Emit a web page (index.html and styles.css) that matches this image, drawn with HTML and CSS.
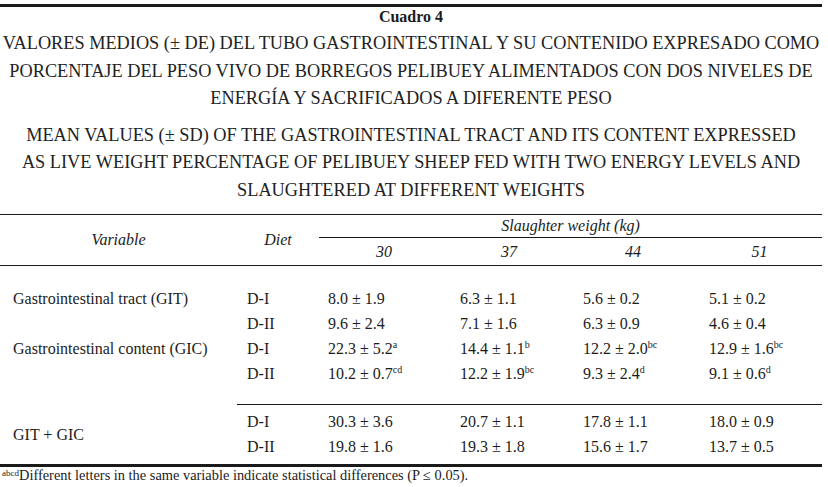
FILE: index.html
```html
<!DOCTYPE html>
<html lang="es">
<head>
<meta charset="utf-8">
<title>Cuadro 4</title>
<link rel="stylesheet" href="styles.css">
</head>
<body>
<div class="page">
  <div class="rule-thick"></div>
  <div class="cuadro">Cuadro 4</div>
  <p class="title title-es">VALORES MEDIOS (± DE) DEL TUBO GASTROINTESTINAL Y SU CONTENIDO EXPRESADO COMO<br>PORCENTAJE DEL PESO VIVO DE BORREGOS PELIBUEY ALIMENTADOS CON DOS NIVELES DE<br>ENERGÍA Y SACRIFICADOS A DIFERENTE PESO</p>
  <p class="title title-en">MEAN VALUES (± SD) OF THE GASTROINTESTINAL TRACT AND ITS CONTENT EXPRESSED<br>AS LIVE WEIGHT PERCENTAGE OF PELIBUEY SHEEP FED WITH TWO ENERGY LEVELS AND<br>SLAUGHTERED AT DIFFERENT WEIGHTS</p>
  <div class="rule-thin"></div>
  <table class="data">
    <colgroup>
      <col class="c-var"><col class="c-diet"><col class="c-w1"><col class="c-w2"><col class="c-w3"><col class="c-w4">
    </colgroup>
    <thead>
      <tr class="h1">
        <th class="h-var" rowspan="2">Variable</th>
        <th class="h-diet" rowspan="2">Diet</th>
        <th class="h-sw" colspan="4">Slaughter weight (kg)</th>
      </tr>
      <tr class="h2">
        <th class="h-num">30</th>
        <th class="h-num">37</th>
        <th class="h-num">44</th>
        <th class="h-num">51</th>
      </tr>
    </thead>
    <tbody class="main">
      <tr class="first">
        <td class="var">Gastrointestinal tract (GIT)</td>
        <td class="diet">D-I</td>
        <td class="v1">8.0 ± 1.9</td>
        <td class="v2">6.3 ± 1.1</td>
        <td class="v3">5.6 ± 0.2</td>
        <td class="v4">5.1 ± 0.2</td>
      </tr>
      <tr>
        <td class="var"></td>
        <td class="diet">D-II</td>
        <td class="v1">9.6 ± 2.4</td>
        <td class="v2">7.1 ± 1.6</td>
        <td class="v3">6.3 ± 0.9</td>
        <td class="v4">4.6 ± 0.4</td>
      </tr>
      <tr>
        <td class="var">Gastrointestinal content (GIC)</td>
        <td class="diet">D-I</td>
        <td class="v1">22.3 ± 5.2<sup>a</sup></td>
        <td class="v2">14.4 ± 1.1<sup>b</sup></td>
        <td class="v3">12.2 ± 2.0<sup>bc</sup></td>
        <td class="v4">12.9 ± 1.6<sup>bc</sup></td>
      </tr>
      <tr class="last">
        <td class="var"></td>
        <td class="diet">D-II</td>
        <td class="v1">10.2 ± 0.7<sup>cd</sup></td>
        <td class="v2">12.2 ± 1.9<sup>bc</sup></td>
        <td class="v3">9.3 ± 2.4<sup>d</sup></td>
        <td class="v4">9.1 ± 0.6<sup>d</sup></td>
      </tr>
    </tbody>
    <tbody class="total">
      <tr class="first">
        <td class="var" rowspan="2">GIT + GIC</td>
        <td class="diet">D-I</td>
        <td class="v1">30.3 ± 3.6</td>
        <td class="v2">20.7 ± 1.1</td>
        <td class="v3">17.8 ± 1.1</td>
        <td class="v4">18.0 ± 0.9</td>
      </tr>
      <tr class="last">
        <td class="diet">D-II</td>
        <td class="v1">19.8 ± 1.6</td>
        <td class="v2">19.3 ± 1.8</td>
        <td class="v3">15.6 ± 1.7</td>
        <td class="v4">13.7 ± 0.5</td>
      </tr>
    </tbody>
  </table>
  <div class="rule-bottom"></div>
  <p class="note"><sup>abcd</sup>Different letters in the same variable indicate statistical differences (P ≤ 0.05).</p>
</div>
</body>
</html>
```

FILE: styles.css
```css
html, body {
  margin: 0;
  padding: 0;
  background: #ffffff;
}

body {
  font-family: "Liberation Serif", "Times New Roman", serif;
  color: #1c1c1c;
}

.page {
  width: 822px;
  padding-top: 4px;
}

.rule-thick {
  border-top: 3px solid #1a1a1a;
}

.cuadro {
  font-weight: bold;
  font-size: 16px;
  line-height: 20px;
  text-align: center;
}

.title {
  margin: 0;
  font-size: 18.3px;
  line-height: 27.5px;
  text-align: center;
  color: #222;
}

.title-es {
  margin-top: 3px;
}

.title-en {
  margin-top: 9px;
}

.rule-thin {
  margin-top: 10px;
  border-top: 1px solid #1a1a1a;
}

.data {
  width: 822px;
  table-layout: fixed;
  border-collapse: separate;
  border-spacing: 0;
  font-size: 16px;
}

.c-var { width: 237px; }
.c-diet { width: 82px; }
.c-w1 { width: 130px; }
.c-w2 { width: 120px; }
.c-w3 { width: 128px; }
.c-w4 { width: 125px; }

.data th,
.data td {
  padding: 0;
  white-space: nowrap;
}

.data th {
  font-weight: normal;
  font-style: italic;
  text-align: center;
  vertical-align: middle;
}

.h1 .h-sw {
  height: 22px;
  line-height: 22px;
  border-bottom: 1px solid #1a1a1a;
}

.h-var,
.h-diet,
.h-num {
  border-bottom: 1px solid #1a1a1a;
}

.h-num {
  height: 27px;
  line-height: 27px;
}

.data td {
  line-height: 25px;
  height: 25px;
  text-align: left;
  vertical-align: middle;
}

.var { padding-left: 13px !important; }
.diet { padding-left: 10px !important; }
.v1 { padding-left: 9px !important; }
.v2 { padding-left: 11px !important; }
.v3 { padding-left: 14px !important; }
.v4 { padding-left: 12px !important; }

.main .first td { padding-top: 20px; }
.main .last td { padding-bottom: 18px; }

.total .first td.diet,
.total .first td.v1,
.total .first td.v2,
.total .first td.v3,
.total .first td.v4 {
  border-top: 1px solid #1a1a1a;
  padding-top: 4px;
}

.total .last td { padding-bottom: 5px; }

sup {
  font-size: 10px;
  line-height: 0;
  vertical-align: 6px;
}

.rule-bottom {
  border-top: 3px solid #1a1a1a;
}

.note {
  margin: 0;
  font-size: 14.4px;
  line-height: 16px;
  padding-left: 2px;
}

.note sup {
  font-size: 9px;
  vertical-align: 4px;
}
```
